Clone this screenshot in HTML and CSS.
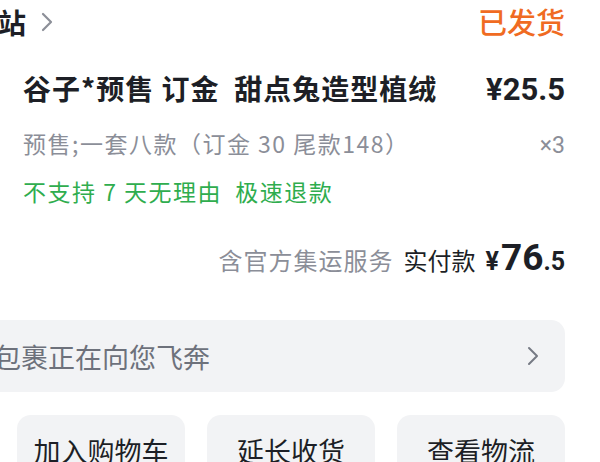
FILE: index.html
```html
<!DOCTYPE html>
<html>
<head>
    <meta name="viewport" content="width=device-width, initial-scale=1.0">
    <title>订单详情</title>
    <link rel="stylesheet" href="styles.css">
</head>
<body>

    <div class="order-card">
        <!-- shop name and order status -->
        <div class="order-head">
            <div class="shop">
                <span class="shop-name">站</span>
                <svg class="shop-arrow" width="12" height="20" viewBox="0 0 12 20">
                    <path d="M2 2 L10 10 L2 18" fill="none" stroke="#8c8f98" stroke-width="2.2" stroke-linecap="round" stroke-linejoin="round"/>
                </svg>
            </div>
            <span class="status">已发货</span>
        </div>

        <!-- goods row -->
        <div class="item">
            <div class="item-row">
                <span class="item-title">谷子*预售 订金&nbsp; 甜点兔造型植绒</span>
                <span class="item-price">¥25.5</span>
            </div>
            <div class="item-row item-spec">
                <span>预售;一套八款（订金 30 尾款148）</span>
                <span class="item-qty">×3</span>
            </div>
            <div class="item-tags">不支持 7 天无理由&nbsp; 极速退款</div>
        </div>

        <div class="total">
            <span class="total-note">含官方集运服务</span>
            <span class="total-label">实付款</span>
            <span class="total-price"><small>¥</small>76<em>.5</em></span>
        </div>

        <!-- logistics bar -->
        <div class="logistics">
            <span>包裹正在向您飞奔</span>
            <svg width="14" height="20" viewBox="0 0 14 20">
                <path d="M3 2 L11 10 L3 18" fill="none" stroke="#767a84" stroke-width="2" stroke-linecap="round" stroke-linejoin="round"/>
            </svg>
        </div>

        <div class="actions">
            <a href="#" class="btn">加入购物车</a>
            <a href="#" class="btn">延长收货</a>
            <a href="#" class="btn">查看物流</a>
        </div>
    </div>

</body>
</html>
```

FILE: styles.css
```css
* {
    margin: 0;
    padding: 0;
    box-sizing: border-box;
}
body {
    background: #fff;
    font-family: "Noto Sans CJK SC", "Noto Sans", sans-serif;
    color: #1d1f26;
    overflow: hidden;
    height: 462px;
}
.order-card {
    width: 600px;
    padding: 0 35px 0 0;
}

/* head */
.order-head {
    display: flex;
    justify-content: space-between;
    align-items: center;
    padding-top: 7px;
    height: 36px;
}
.shop {
    display: flex;
    align-items: center;
    margin-left: -2px;
}
.shop-name {
    font-size: 28px;
    line-height: 28px;
    font-weight: bold;
}
.shop-arrow {
    margin-left: 15px;
}
.status {
    font-size: 29px;
    line-height: 29px;
    font-weight: 500;
    color: #f06b22;
}

/* goods */
.item {
    padding-left: 23px;
    margin-top: 38px;
}
.item-row {
    display: flex;
    justify-content: space-between;
    align-items: baseline;
}
.item-title {
    font-size: 28px;
    line-height: 28px;
    font-weight: bold;
    letter-spacing: 1px;
}
.item-price {
    font-family: Roboto, "Noto Sans", sans-serif;
    font-size: 31px;
    line-height: 28px;
    font-weight: bold;
}
.item-spec {
    margin-top: 28px;
    font-size: 23px;
    line-height: 23px;
    color: #8b8e98;
    letter-spacing: 1.5px;
}
.item-qty {
    font-family: Roboto, sans-serif;
    font-size: 23px;
    letter-spacing: 0;
}
.item-tags {
    margin-top: 23px;
    font-size: 23px;
    line-height: 23px;
    color: #2fad4e;
    letter-spacing: 1.5px;
}

/* total */
.total {
    display: flex;
    justify-content: flex-end;
    align-items: baseline;
    margin-top: 33px;
    height: 32px;
}
.total-note {
    font-size: 24px;
    color: #8b8e98;
    letter-spacing: 1px;
}
.total-label {
    font-size: 24px;
    margin-left: 10px;
    color: #1d1f26;
}
.total-price {
    font-family: Roboto, "Noto Sans", sans-serif;
    font-weight: bold;
    font-size: 37px;
    margin-left: 10px;
}
.total-price small {
    font-size: 25px;
    margin-right: 2px;
}
.total-price em {
    font-style: normal;
    font-size: 25px;
}

/* logistics */
.logistics {
    display: flex;
    justify-content: space-between;
    align-items: center;
    margin: 52px 0 0 -30px;
    height: 72px;
    padding: 0 25px 0 24px;
    background: #f2f3f5;
    border-radius: 14px;
    font-size: 27px;
    color: #6d717b;
}

/* buttons */
.actions {
    display: flex;
    justify-content: flex-end;
    gap: 22px;
    margin-top: 23px;
}
.btn {
    display: flex;
    justify-content: center;
    align-items: center;
    width: 168px;
    height: 70px;
    border-radius: 14px;
    background: #f2f3f5;
    font-size: 27px;
    color: #1d1f26;
    text-decoration: none;
}
```
